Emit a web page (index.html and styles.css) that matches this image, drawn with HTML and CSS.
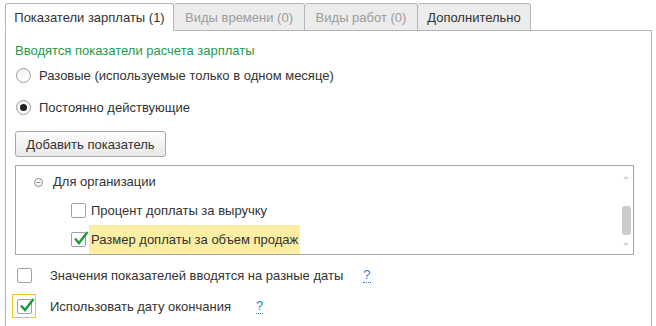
FILE: index.html
```html
<!DOCTYPE html>
<html>
<head>
    <title>Настройки начисления</title>
    <link rel="stylesheet" href="styles.css">
</head>
<body>
    <div class="tabs">
        <div class="tab active">Показатели зарплаты (1)</div>
        <div class="tab disabled">Виды времени (0)</div>
        <div class="tab disabled">Виды работ (0)</div>
        <div class="tab">Дополнительно</div>
    </div>
    <div class="panel">
        <div class="caption">Вводятся показатели расчета зарплаты</div>

        <div class="radio-row">
            <span class="radio"></span>
            <span>Разовые (используемые только в одном месяце)</span>
        </div>
        <div class="radio-row">
            <span class="radio checked"></span>
            <span>Постоянно действующие</span>
        </div>

        <button class="btn">Добавить показатель</button>

        <div class="tree">
            <div class="tree-rows">
                <div class="tree-row group">
                    <svg class="collapse" width="9" height="9" viewBox="0 0 9 9">
                        <circle cx="4.5" cy="4.5" r="4" fill="none" stroke="#8a8a8a"/>
                        <line x1="2.5" y1="4.5" x2="6.5" y2="4.5" stroke="#8a8a8a"/>
                    </svg>
                    <span>Для организации</span>
                </div>
                <div class="tree-row item">
                    <span class="check"></span>
                    <span class="label">Процент доплаты за выручку</span>
                </div>
                <div class="tree-row item">
                    <span class="check">
                        <svg class="tick" width="16" height="16" viewBox="0 0 16 16">
                            <path d="M2 8.5 L6 13 L14.5 2" fill="none" stroke="#1e9a3c" stroke-width="2.4"/>
                        </svg>
                    </span>
                    <span class="label current">Размер доплаты за объем продаж</span>
                </div>
            </div>
            <div class="scrollbar">
                <span class="arrow up"></span>
                <span class="thumb"></span>
                <span class="arrow down"></span>
            </div>
        </div>

        <div class="check-row">
            <span class="frame"><span class="check"></span></span>
            <span class="text">Значения показателей вводятся на разные даты</span>
            <span class="help">?</span>
        </div>
        <div class="check-row">
            <span class="frame focused">
                <span class="check">
                    <svg class="tick" width="16" height="16" viewBox="0 0 16 16">
                        <path d="M2 8.5 L6 13 L14.5 2" fill="none" stroke="#1e9a3c" stroke-width="2.4"/>
                    </svg>
                </span>
            </span>
            <span class="text">Использовать дату окончания</span>
            <span class="help">?</span>
        </div>
    </div>
</body>
</html>
```

FILE: styles.css
```css
body {
    margin: 0;
    background: #fff;
    color: #333;
    font-family: "Liberation Sans", Arial, sans-serif;
    font-size: 13px;
    overflow: hidden;
}

.tabs {
    display: flex;
    padding: 3px 0 0 5px;
    height: 27px;
    position: relative;
    z-index: 1;
}

.tab {
    box-sizing: border-box;
    height: 28px;
    display: flex;
    align-items: center;
    justify-content: center;
    white-space: nowrap;
    border: 1px solid #b4b4b4;
    border-left: none;
    border-radius: 3px 3px 0 0;
    background: #ececec;
    color: #333;
}

.tab.active {
    border-left: 1px solid #b4b4b4;
    border-bottom-color: #fff;
    background: #fff;
    width: 169px;
}

.tab.disabled {
    color: #9b9b9b;
}

.tab:nth-child(2) { width: 131px; }
.tab:nth-child(3) { width: 113px; }
.tab:nth-child(4) { width: 113px; }

.panel {
    margin: 0 4px 0 5px;
    border: 1px solid #b4b4b4;
    border-bottom: none;
    height: 300px;
    padding: 11px 0 0 9px;
    box-sizing: border-box;
}

.caption {
    color: #1f9a4e;
    line-height: 18px;
}

.radio-row {
    display: flex;
    align-items: center;
    gap: 8px;
    height: 20px;
    margin-top: 5px;
}

.radio-row + .radio-row {
    margin-top: 12px;
}

.radio {
    box-sizing: border-box;
    width: 15px;
    height: 15px;
    border: 1px solid #9a9a9a;
    border-radius: 50%;
    background: linear-gradient(#f4f4f4, #fff);
    display: flex;
    align-items: center;
    justify-content: center;
    margin-left: 1px;
}

.radio.checked::after {
    content: "";
    width: 7px;
    height: 7px;
    border-radius: 50%;
    background: #222;
}

.btn {
    display: block;
    margin-top: 14px;
    width: 151px;
    height: 26px;
    padding: 0;
    border: 1px solid #a9a9a9;
    border-radius: 3px;
    background: linear-gradient(#fdfdfd, #e9e9e9);
    font-family: inherit;
    font-size: 13px;
    color: #333;
}

.tree {
    margin-top: 8px;
    width: 619px;
    height: 90px;
    box-sizing: border-box;
    border: 1px solid #a6a6a6;
    display: flex;
}

.tree-rows {
    flex: 1;
    padding-top: 1px;
}

.tree-row {
    height: 29px;
    display: flex;
    align-items: center;
}

.tree-row.group {
    padding-left: 18px;
    gap: 10px;
}

.tree-row.item {
    padding-left: 55px;
}

.collapse {
    margin-top: 1px;
}

.check {
    box-sizing: border-box;
    width: 15px;
    height: 15px;
    border: 1px solid #a0a0a0;
    border-radius: 2px;
    background: #fff;
    position: relative;
    flex: none;
}

.tick {
    position: absolute;
    left: 1px;
    top: -3px;
}

.label {
    margin-left: 3px;
    padding: 0 2px;
    line-height: 29px;
}

.label.current {
    background: #fcefa3;
}

.scrollbar {
    width: 14px;
    display: flex;
    flex-direction: column;
    align-items: center;
    padding-top: 10px;
}

.arrow {
    width: 0;
    height: 0;
    border-left: 3px solid transparent;
    border-right: 3px solid transparent;
}

.arrow.up {
    border-bottom: 3px solid #d2d2d2;
}

.arrow.down {
    border-top: 3px solid #d2d2d2;
    margin-top: 8px;
}

.thumb {
    width: 9px;
    height: 29px;
    border-radius: 3px;
    background: #cbcbcb;
    margin-top: 27px;
}

.check-row {
    display: flex;
    align-items: center;
    height: 24px;
    margin-left: -3px;
    margin-top: 8px;
}

.check-row + .check-row {
    margin-top: 7px;
}

.frame {
    box-sizing: border-box;
    width: 24px;
    height: 24px;
    display: flex;
    align-items: center;
    justify-content: center;
    border: 1px solid transparent;
}

.frame.focused {
    border-color: #f3c623;
}

.check-row .text {
    margin-left: 14px;
}

.help {
    color: #2f7bc4;
    border-bottom: 1px dotted #2f7bc4;
    line-height: 14px;
    margin-left: 20px;
}

.check-row + .check-row .help {
    margin-left: 25px;
}
```
